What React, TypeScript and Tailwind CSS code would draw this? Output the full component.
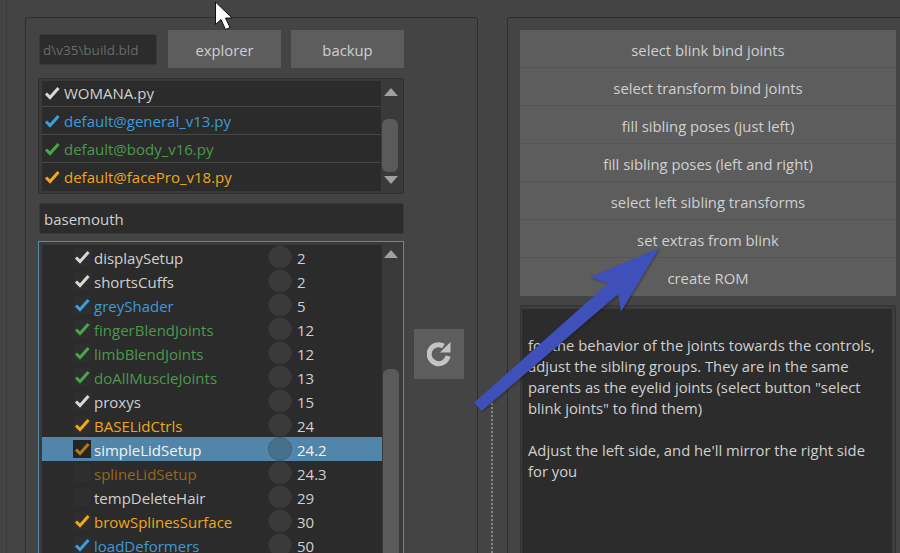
const WHITE = "text-[#d0d0d0]";
const BLUE = "text-[#3b9ad9]";
const GREEN = "text-[#4a9a4a]";
const ORANGE = "text-[#eea61e]";

const files = [
  { name: "WOMANA.py", color: WHITE, check: "#d8d8d8" },
  { name: "default@general_v13.py", color: BLUE, check: "#3b9ee0" },
  { name: "default@body_v16.py", color: GREEN, check: "#4aa54a" },
  { name: "default@facePro_v18.py", color: ORANGE, check: "#f0a81c" },
];

const steps = [
  { name: "displaySetup", num: "2", color: WHITE, check: "#d8d8d8" },
  { name: "shortsCuffs", num: "2", color: WHITE, check: "#d8d8d8" },
  { name: "greyShader", num: "5", color: BLUE, check: "#3b9ee0" },
  { name: "fingerBlendJoints", num: "12", color: GREEN, check: "#4aa54a" },
  { name: "limbBlendJoints", num: "12", color: GREEN, check: "#4aa54a" },
  { name: "doAllMuscleJoints", num: "13", color: GREEN, check: "#4aa54a" },
  { name: "proxys", num: "15", color: WHITE, check: "#d8d8d8" },
  { name: "BASELidCtrls", num: "24", color: ORANGE, check: "#f0a81c" },
  { name: "simpleLidSetup", num: "24.2", color: "text-[#f2f2f2]", check: "#b07c14", selected: true },
  { name: "splineLidSetup", num: "24.3", color: "text-[#94691a]" },
  { name: "tempDeleteHair", num: "29", color: WHITE },
  { name: "browSplinesSurface", num: "30", color: ORANGE, check: "#f0a81c" },
  { name: "loadDeformers", num: "50", color: BLUE, check: "#3b9ee0" },
];

const actions = [
  "select blink bind joints",
  "select transform bind joints",
  "fill sibling poses (just left)",
  "fill sibling poses (left and right)",
  "select left sibling transforms",
  "set extras from blink",
  "create ROM",
];

function Check({ color }: { color?: string }) {
  if (!color) return null;
  return (
    <svg viewBox="0 0 16 16" className="w-[16px] h-[16px]">
      <path d="M2 8.5 L6 12.6 L14.5 3" fill="none" stroke={color} strokeWidth="3" />
    </svg>
  );
}

function Arrow({ up }: { up?: boolean }) {
  return (
    <svg viewBox="0 0 14 8" className="w-[14px] h-[8px]">
      <path d={up ? "M0 8 L7 0 L14 8 Z" : "M0 0 L14 0 L7 8 Z"} fill="#a0a0a0" />
    </svg>
  );
}

export default function App() {
  return (
    <div
      className="relative w-[900px] h-[553px] overflow-hidden bg-[#444444] flex pl-[6px] pt-[17px] text-[15px] text-[#d0d0d0]"
      style={{ fontFamily: '"Open Sans", "Noto Sans", sans-serif' }}
    >
      <div className="w-px h-[600px] -mt-[17px] bg-[#3a3a3a] shrink-0" />

      {/* left panel */}
      <div className="ml-[18px] w-[453px] h-[560px] border border-[#2f2f2f] rounded-[2px] pl-[12px] pt-[12px] flex flex-col shrink-0">
        <div className="flex items-center w-[366px]">
          <div className="ml-px w-[118px] h-[31px] bg-[#2c2c2c] border border-[#3a3a3a] rounded-[2px] pl-[3px] pt-[2px] flex items-center text-[13.5px] text-[#6a6a6a] overflow-hidden whitespace-nowrap">
            d\v35\build.bld
          </div>
          <button className="ml-[11px] w-[113px] h-[38px] bg-[#5d5d5d] pt-[3px] text-[14.8px]">explorer</button>
          <button className="ml-[10px] w-[113px] h-[38px] bg-[#5d5d5d] pt-[3px] text-[14.8px]">backup</button>
        </div>

        <div className="mt-[10px] w-[366px] h-[116px] border border-[#2f2f2f] rounded-[2px] bg-[#3a3a3a] pl-[3px] py-[2px] flex">
          <div className="w-[339px] bg-[#2b2b2b] flex flex-col overflow-hidden">
            {files.map((f, i) => (
              <div
                key={f.name}
                className={`h-[28px] shrink-0 flex items-center border-b border-[#464646] last:border-b-0 pl-[2px] ${i === 0 ? "-mt-[2px]" : ""}`}
              >
                <Check color={f.check} />
                <span className={`ml-[4px] whitespace-nowrap ${i < 3 ? "pt-[2px]" : ""} ${f.color}`}>{f.name}</span>
              </div>
            ))}
          </div>
          <div className="w-[19px] flex flex-col items-center justify-between py-[7px] relative">
            <Arrow up />
            <div className="absolute left-[1px] top-[38px] w-[16px] h-[53px] rounded-[6px] bg-[#5a5a5a]" />
            <Arrow />
          </div>
        </div>

        <div className="mt-[9px] ml-px w-[365px] h-[31px] bg-[#2c2c2c] border border-[#3a3a3a] rounded-[2px] pl-[4px] pt-[2px] flex items-center">basemouth</div>

        <div className="mt-[7px] w-[366px] h-[330px] border border-[#5a8aa8] bg-[#3a3a3a] pl-[3px] pt-[3px] flex">
          <div className="w-[340px] bg-[#2b2b2b] flex flex-col">
            {steps.map((s) => (
              <div key={s.name} className={`h-[24px] shrink-0 flex items-center ${s.selected ? "bg-[#5186aa]" : ""}`}>
                <div className={`ml-[31px] w-[18px] h-[18px] flex items-center justify-center ${s.selected ? "bg-[#252525]" : "bg-[#2e2e2e]"}`}>
                  <Check color={s.check} />
                </div>
                <span className={`ml-[3px] w-[174px] pt-[3px] whitespace-nowrap ${s.color}`}>{s.name}</span>
                <div className={`w-[24px] h-[24px] rounded-full border ${s.selected ? "bg-[#47708c] border-[#3f6078]" : "bg-[#3a3a3a] border-[#333333]"}`} />
                <span className={`ml-[5px] pt-[3px] ${s.selected ? "text-[#f2f2f2]" : ""}`}>{s.num}</span>
              </div>
            ))}
          </div>
          <div className="w-[18px] relative flex flex-col items-center pt-[5px]">
            <Arrow up />
            <div className="absolute left-[1px] top-[124px] w-[16px] h-[220px] rounded-[6px] bg-[#5a5a5a]" />
          </div>
        </div>
      </div>

      {/* middle splitter */}
      <div className="w-[29px] shrink-0 flex justify-center pr-px pt-[386px]">
        <div className="h-[150px] border-l-2 border-dotted border-[#8a8a8a]" />
      </div>

      {/* right panel */}
      <div className="w-[410px] h-[560px] border border-[#2f2f2f] rounded-[2px] pl-[12px] pt-[12px] flex flex-col shrink-0">
        <div className="w-[376px] flex flex-col">
          {actions.map((a) => (
            <button key={a} className="h-[38px] bg-[#5d5d5d] border-b border-[#565656] last:border-b-0 pt-[3px] text-[14.8px]">{a}</button>
          ))}
        </div>
        <div className="mt-[9px] w-[376px] h-[260px] border border-[#333333] rounded-[2px] bg-[#3c3c3c] pl-[1px] pr-[3px] pt-[3px]">
          <div className="h-full bg-[#2c2c2c] pl-[6px] pr-[10px] pt-[26px] leading-[21px] text-[14.8px]">
            <p>for the behavior of the joints towards the controls, adjust the sibling groups. They are in the same parents as the eyelid joints (select button "select blink joints" to find them)</p>
            <p className="mt-[21px] w-[340px]">Adjust the left side, and he'll mirror the right side for you</p>
          </div>
        </div>
      </div>

      {/* reload button */}
      <button className="absolute left-[414px] top-[329px] w-[50px] h-[50px] bg-[#5d5d5d] flex items-center justify-center">
        <svg viewBox="0 0 24 26" className="w-[24px] h-[26px]">
          <path d="M21 15 A9.5 9.5 0 1 1 16.5 5" fill="none" stroke="#c4c4c4" strokeWidth="5" />
          <path d="M23.5 1 V11.5 H13 Z" fill="#c4c4c4" />
        </svg>
      </button>

      {/* annotation arrow */}
      <svg className="absolute left-0 top-0 w-[900px] h-[553px] pointer-events-none drop-shadow-[1px_1px_1px_rgba(0,0,0,0.3)]" viewBox="0 0 900 553">
        <path d="M474 402.7 L608.3 283.3 L590 277.3 L659 248.3 L621 311.7 L618.3 294 L481.7 411 Z" fill="#3f50bb" />
      </svg>

      {/* mouse cursor */}
      <svg className="absolute left-[214px] top-0 w-[20px] h-[32px]" viewBox="0 0 20 32">
        <path d="M1.5 2 L1.5 24.5 L7 19.5 L11.5 29.5 L16 27.5 L11.5 18 L18 18 Z" fill="#ffffff" stroke="#111111" strokeWidth="1" />
      </svg>
    </div>
  );
}
